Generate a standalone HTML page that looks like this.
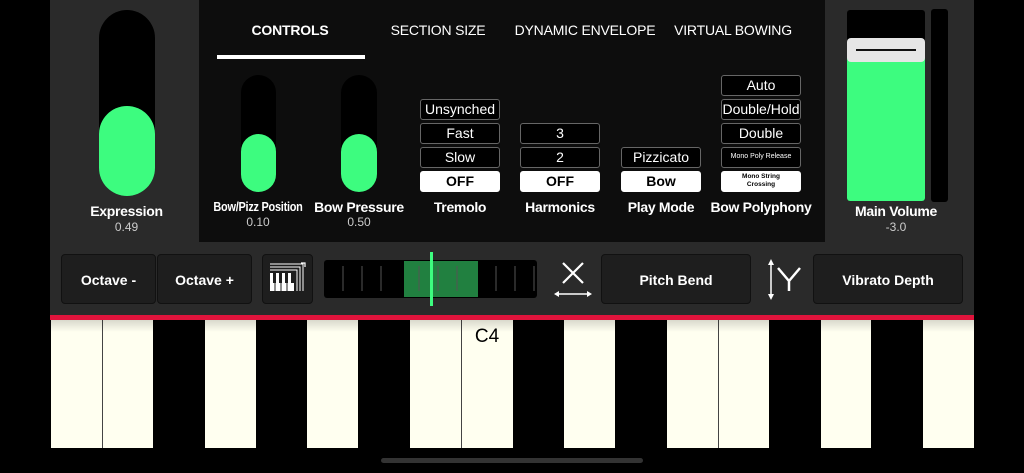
<!DOCTYPE html>
<html><head><style>
*{margin:0;padding:0;box-sizing:border-box}
body{width:1024px;height:473px;background:#000;position:relative;overflow:hidden;font-family:"Liberation Sans",sans-serif;color:#fff}
.a{position:absolute}
.lbl{position:absolute;font-weight:bold;font-size:14px;text-align:center;letter-spacing:-0.3px;white-space:nowrap}
.val{position:absolute;font-size:12px;color:#ccc;text-align:center}
.b{position:absolute;width:80px;height:21px;border:1.5px solid #666;border-radius:3px;background:#000;font-size:14px;text-align:center;line-height:18px;white-space:nowrap}
.b.on{background:#fff;color:#000;font-weight:bold;border-color:#fff}
.tab{position:absolute;top:22px;font-size:14px;text-align:center;width:160px;white-space:nowrap;letter-spacing:-0.2px}
.btn{position:absolute;top:254px;height:50px;background:#1e1e1e;border:1px solid #111;border-radius:4px;font-weight:bold;font-size:14px;text-align:center;line-height:50px}
.k{position:absolute;top:320px;height:128px;background:#fffff0;border-left:1px solid #444}
</style></head><body>
<div class="a" style="left:50px;top:0;width:149px;height:242px;background:#2a2a2a"></div>
<div class="a" style="left:199px;top:0;width:626px;height:242px;background:#0d0d0d"></div>
<div class="a" style="left:825px;top:0;width:149px;height:242px;background:#2a2a2a"></div>
<div class="a" style="left:50px;top:242px;width:924px;height:74px;background:#2a2a2a"></div>
<div class="a" style="left:50px;top:315px;width:924px;height:5px;background:#e0143c"></div>

<div class="a" style="left:99px;top:10px;width:56px;height:186px;border-radius:28px;background:#000"></div>
<div class="a" style="left:99px;top:106px;width:56px;height:90px;border-radius:28px;background:#3dfc7f"></div>
<div class="lbl" style="left:50px;top:203px;width:153px">Expression</div>
<div class="val" style="left:50px;top:220px;width:153px">0.49</div>
<div class="a" style="left:241px;top:75px;width:35px;height:117px;border-radius:18px;background:#000"></div>
<div class="a" style="left:241px;top:134px;width:35px;height:58px;border-radius:18px;background:#3dfc7f"></div>
<div class="a" style="left:341px;top:75px;width:36px;height:117px;border-radius:18px;background:#000"></div>
<div class="a" style="left:341px;top:134px;width:36px;height:58px;border-radius:18px;background:#3dfc7f"></div>
<div class="lbl" style="left:198px;top:199px;width:120px;font-size:13px;transform:scaleX(.84)">Bow/Pizz Position</div>
<div class="val" style="left:208px;top:215px;width:100px">0.10</div>
<div class="lbl" style="left:309px;top:199px;width:100px">Bow Pressure</div>
<div class="val" style="left:309px;top:215px;width:100px">0.50</div>

<div class="tab" style="left:210px;font-weight:bold">CONTROLS</div>
<div class="a" style="left:217px;top:55px;width:148px;height:4px;background:#fff"></div>
<div class="tab" style="left:358px">SECTION SIZE</div>
<div class="tab" style="left:505px">DYNAMIC ENVELOPE</div>
<div class="tab" style="left:653px">VIRTUAL BOWING</div>

<div class="b" style="left:420px;top:99px">Unsynched</div>
<div class="b" style="left:420px;top:123px">Fast</div>
<div class="b" style="left:420px;top:147px">Slow</div>
<div class="b on" style="left:420px;top:171px">OFF</div>
<div class="lbl" style="left:410px;top:199px;width:100px">Tremolo</div>
<div class="b" style="left:520px;top:123px">3</div>
<div class="b" style="left:520px;top:147px">2</div>
<div class="b on" style="left:520px;top:171px">OFF</div>
<div class="lbl" style="left:510px;top:199px;width:100px">Harmonics</div>
<div class="b" style="left:621px;top:147px">Pizzicato</div>
<div class="b on" style="left:621px;top:171px">Bow</div>
<div class="lbl" style="left:611px;top:199px;width:100px">Play Mode</div>
<div class="b" style="left:721px;top:75px">Auto</div>
<div class="b" style="left:721px;top:99px">Double/Hold</div>
<div class="b" style="left:721px;top:123px">Double</div>
<div class="b" style="left:721px;top:147px;font-size:7px">Mono Poly Release</div>
<div class="b on" style="left:721px;top:171px;font-size:6.5px;line-height:8px;padding-top:1px;white-space:normal">Mono String<br>Crossing</div>
<div class="lbl" style="left:706px;top:199px;width:110px">Bow Polyphony</div>

<div class="a" style="left:847px;top:10px;width:78px;height:191px;background:#000;border-radius:3px"></div>
<div class="a" style="left:847px;top:55px;width:78px;height:146px;background:#3dfc7f;border-radius:0 0 3px 3px"></div>
<div class="a" style="left:847px;top:38px;width:78px;height:24px;background:#e6e6e6;border-radius:4px"></div>
<div class="a" style="left:856px;top:49px;width:60px;height:2px;background:#111"></div>
<div class="a" style="left:931px;top:9px;width:17px;height:193px;background:#000;border-radius:3px"></div>
<div class="lbl" style="left:846px;top:203px;width:100px">Main Volume</div>
<div class="val" style="left:846px;top:220px;width:100px">-3.0</div>

<div class="btn" style="left:61px;width:95px">Octave -</div>
<div class="btn" style="left:157px;width:95px">Octave +</div>
<div class="btn" style="left:262px;width:51px"></div>
<svg class="a" style="left:262px;top:254px" width="51" height="50" viewBox="0 0 51 50">
<rect x="8" y="19" width="24" height="18" fill="#fff"/>
<g stroke="#1e1e1e" stroke-width="1"><line x1="13" y1="19" x2="13" y2="37"/><line x1="19" y1="19" x2="19" y2="37"/><line x1="25" y1="19" x2="25" y2="37"/></g>
<g fill="#1e1e1e"><rect x="11" y="19" width="3" height="10"/><rect x="17" y="19" width="3" height="10"/><rect x="23" y="19" width="3" height="10"/><rect x="29" y="19" width="3" height="10"/></g>
<path d="M8 16H35V37M8 13H38V37M8 10H41V37" fill="none" stroke="#fff" stroke-width="1"/>
<path d="M39 9H43V13" fill="none" stroke="#fff" stroke-width="1.2"/>
</svg>
<div class="a" style="left:324px;top:260px;width:213px;height:38px;background:#000;border-radius:3px"></div>
<div class="a" style="left:404px;top:261px;width:74px;height:36px;background:#218040"></div>
<svg class="a" style="left:324px;top:260px" width="213" height="38">
<g stroke="#555" stroke-width="1"><line x1="19" y1="6" x2="19" y2="31"/><line x1="38" y1="6" x2="38" y2="31"/><line x1="57" y1="6" x2="57" y2="31"/><line x1="95" y1="6" x2="95" y2="31"/><line x1="114" y1="6" x2="114" y2="31"/><line x1="133" y1="6" x2="133" y2="31"/><line x1="172" y1="6" x2="172" y2="31"/><line x1="191" y1="6" x2="191" y2="31"/><line x1="210" y1="6" x2="210" y2="31"/></g></svg>
<div class="a" style="left:430px;top:252px;width:3px;height:54px;background:#3dfc7f"></div>
<svg class="a" style="left:553px;top:260px" width="42" height="40"><path d="M10 3L30 23M30 3L10 23" stroke="#fff" stroke-width="2.2"/><path d="M3 34H37" stroke="#fff" stroke-width="1.5"/><path d="M1 34l5-3v6zM39 34l-5-3v6z" fill="#fff"/></svg>
<div class="btn" style="left:601px;width:150px">Pitch Bend</div>
<svg class="a" style="left:763px;top:258px" width="42" height="44"><path d="M8 5V38" stroke="#fff" stroke-width="1.5"/><path d="M8 1l-3 6h6zM8 42l-3-6h6z" fill="#fff"/><path d="M15 10L26 23L37 10M26 23V33" fill="none" stroke="#fff" stroke-width="2.5"/></svg>
<div class="btn" style="left:813px;width:150px">Vibrato Depth</div>

<div class="k" style="left:51px;width:51px;border-left:none"></div>
<div class="k" style="left:102px;width:51px"></div>
<div class="k" style="left:205px;width:51px;border-left:none"></div>
<div class="k" style="left:307px;width:51px;border-left:none"></div>
<div class="k" style="left:410px;width:51px;border-left:none"></div>
<div class="k" style="left:461px;width:52px"></div>
<div class="a" style="left:461px;top:326px;width:52px;text-align:center;color:#000;font-size:19px">C4</div>
<div class="k" style="left:564px;width:51px;border-left:none"></div>
<div class="k" style="left:667px;width:51px;border-left:none"></div>
<div class="k" style="left:718px;width:51px"></div>
<div class="k" style="left:821px;width:50px;border-left:none"></div>
<div class="k" style="left:923px;width:51px;border-left:none"></div>
<div class="a" style="left:51px;top:320px;width:923px;height:12px;background:linear-gradient(rgba(0,0,0,.15),rgba(0,0,0,0))"></div>
<div class="a" style="left:381px;top:458px;width:262px;height:5px;border-radius:3px;background:#333"></div>
</body></html>
